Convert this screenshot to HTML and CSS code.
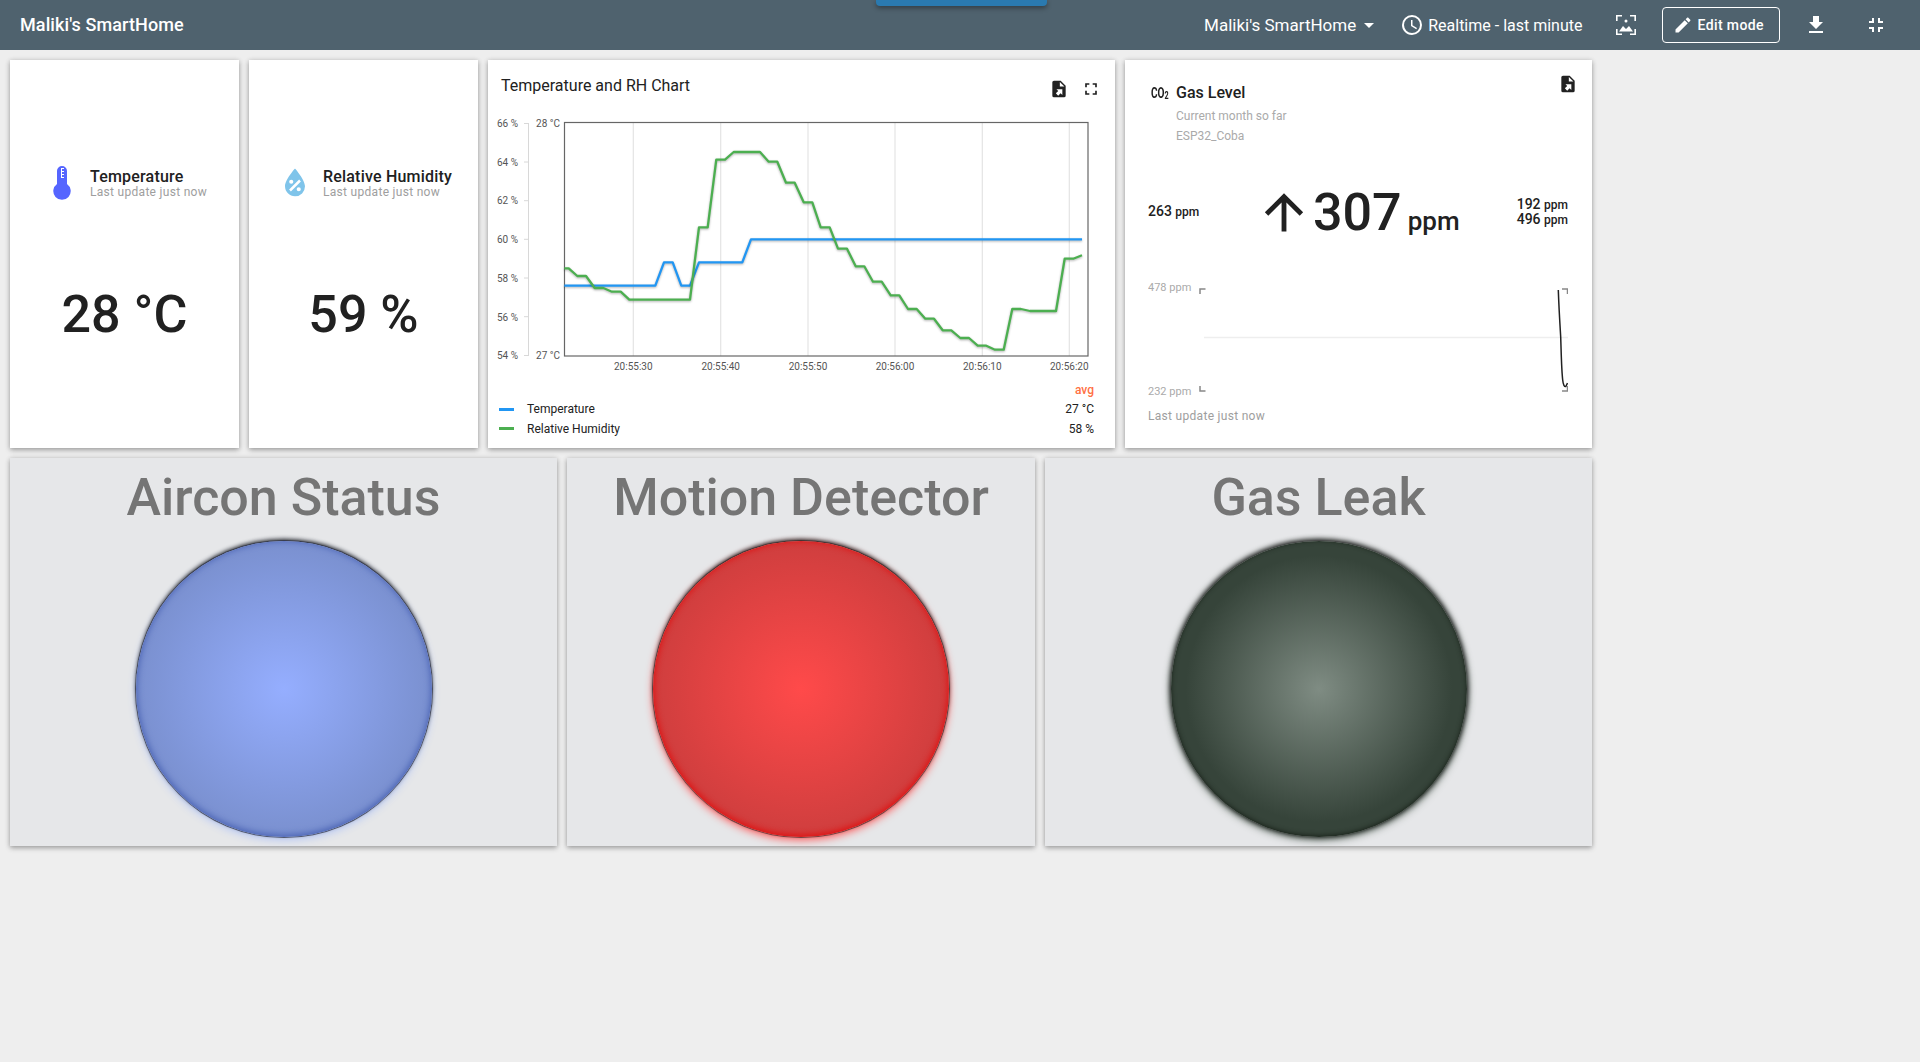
FILE: index.html
```html
<!DOCTYPE html>
<html lang="en">
<head>
	<meta charset="UTF-8">
	<meta name="viewport" content="width=device-width, initial-scale=1.0">
	<title>Maliki's SmartHome</title>
	<link rel="stylesheet" href="styles.css">
</head>
<body>
	<header class="topbar">
		<div class="brand">Maliki's SmartHome</div>
		<div class="topActions">
			<span class="navText">Maliki's SmartHome</span>
			<span class="caret"></span>
			<svg class="icon clockIcon" viewBox="0 0 24 24"><path d="M12,20A8,8 0 0,0 20,12A8,8 0 0,0 12,4A8,8 0 0,0 4,12A8,8 0 0,0 12,20M12,2A10,10 0 0,1 22,12A10,10 0 0,1 12,22C6.47,22 2,17.5 2,12A10,10 0 0,1 12,2M12.5,7V12.25L17,14.92L16.25,16.15L11,13V7H12.5Z"/></svg>
			<span class="rangeText">Realtime - last minute</span>
			<svg class="icon frameIcon" viewBox="0 0 24 24"><path d="M2,2H8V3.6H3.6V8H2ZM16,2H22V8H20.4V3.6H16ZM2,16H3.6V20.4H8V22H2ZM20.4,16H22V22H16V20.4H20.4ZM12,6.5A1.5,1.5 0 1,1 12,9.5A1.5,1.5 0 1,1 12,6.5ZM5,18.5L9,13L12,16L15,13L19,18.5Z"/></svg>
			<button class="editButton">
				<svg class="pencil" viewBox="0 0 24 24"><path d="M20.71,7.04C21.1,6.65 21.1,6 20.71,5.63L18.37,3.29C18,2.9 17.35,2.9 16.96,3.29L15.12,5.12L18.87,8.87M3,17.25V21H6.75L17.81,9.93L14.06,6.18L3,17.25Z"/></svg>
				Edit mode
			</button>
			<svg class="icon downloadIcon" viewBox="0 0 24 24"><path d="M5,20H19V18H5M19,9H15V3H9V9H5L12,16L19,9Z"/></svg>
			<svg class="icon exitIcon" viewBox="0 0 24 24"><path d="M14,14H19V16H16V19H14V14M5,14H10V19H8V16H5V14M8,5H10V10H5V8H8V5M19,8V10H14V5H16V8H19Z"/></svg>
		</div>
	</header>
	<div class="topTab"></div>

	<main class="board">
		<div class="row">
			<section class="card statCard">
				<div class="statHead">
					<svg class="statIcon" viewBox="0 0 40 40">
						<path class="thermoBody" d="M15,7A5,5 0 0,1 25,7V20A8.7,8.7 0 1,1 15,20Z"/>
						<path class="thermoTicks" d="M19,4H22V5H20V7H22V8H20V10H22V11H20V13H22V14H19Z"/>
					</svg>
					<div>
						<div class="statTitle">Temperature</div>
						<div class="statSub">Last update just now</div>
					</div>
				</div>
				<div class="statValue">28 °C</div>
			</section>
			<section class="card statCard">
				<div class="statHead">
					<svg class="statIcon dropIcon" viewBox="0 0.6 24 24"><path d="M12,3.25C12,3.25 6,10 6,14C6,17.32 8.69,20 12,20A6,6 0 0,0 18,14C18,10 12,3.25 12,3.25M14.47,9.97L15.53,11.03L9.53,17.03L8.47,15.97M9.75,10A1.25,1.25 0 0,1 11,11.25A1.25,1.25 0 0,1 9.75,12.5A1.25,1.25 0 0,1 8.5,11.25A1.25,1.25 0 0,1 9.75,10M14.25,14.5A1.25,1.25 0 0,1 15.5,15.75A1.25,1.25 0 0,1 14.25,17A1.25,1.25 0 0,1 13,15.75A1.25,1.25 0 0,1 14.25,14.5Z"/></svg>
					<div>
						<div class="statTitle">Relative Humidity</div>
						<div class="statSub">Last update just now</div>
					</div>
				</div>
				<div class="statValue">59 %</div>
			</section>
			<section class="card chartCard">
				<div class="chartHead">
					<span class="chartTitle">Temperature and RH Chart</span>
					<svg class="smallIcon" viewBox="0 0 24 24"><path d="M6,2C4.89,2 4,2.9 4,4V20A2,2 0 0,0 6,22H18A2,2 0 0,0 20,20V8L14,2M13,3.5L18.5,9H13M8.93,12.22H16V19.29L13.88,17.17L11.05,20L8.22,17.17L11.05,14.35"/></svg>
					<svg class="smallIcon" viewBox="0 0 24 24"><path d="M5,5H10V7H7V10H5V5M14,5H19V10H17V7H14V5M17,14H19V19H14V17H17V14M10,17V19H5V14H7V17H10Z"/></svg>
				</div>
				<svg class="chart" viewBox="488 110 627 270">
					<path class="axisLine" d="M528.5,123V356M524,123.5H528.5M524,162H528.5M524,200.7H528.5M524,239.3H528.5M524,278H528.5M524,316.7H528.5M524,355.5H528.5"/>
					<path class="gridLine" d="M633.3,123V356M720.7,123V356M808,123V356M895,123V356M982.3,123V356M1069.3,123V356"/>
					<rect class="plotBox" x="564.5" y="122.5" width="523.5" height="233.5"/>
					<polyline class="seriesBlue" points="564.3,285.7 655.3,285.7 664,262.3 672.7,262.3 681.3,285.7 690,285.7 699,262.3 742.3,262.3 751,239.3 1082,239.3"/>
					<polyline class="seriesGreen" points="564.3,268.3 568.7,268.3 577.3,276 586,276 594.7,288 603.3,288 612,291.7 620.7,291.7 629.3,299.7 690,299.7 699,227.3 707.7,227.3 716.3,159.7 725,159.7 733.7,152 760,152 768.7,161.7 777.3,161.7 786,182.7 794.7,182.7 803.7,202.3 812.3,202.3 820.7,227.3 829.7,227.3 838,248.7 847,248.7 855.7,266.3 864.3,266.3 873,281.7 881.7,281.7 890.7,295.3 899.3,295.3 908,309 916.7,309 925.3,318.7 934,318.7 942.7,330.3 951.3,330.3 960.3,338 969,338 977.7,345.7 986.3,345.7 995,349.7 1003.7,349.7 1012.3,309 1021,309 1030,311 1056,311 1064.7,258.7 1073.3,258.7 1082,255.3"/>
					<g class="axisText endText">
						<text x="518" y="127">66 %</text>
						<text x="518" y="165.5">64 %</text>
						<text x="518" y="204">62 %</text>
						<text x="518" y="243">60 %</text>
						<text x="518" y="281.5">58 %</text>
						<text x="518" y="320.5">56 %</text>
						<text x="518" y="359">54 %</text>
						<text x="560" y="127">28 °C</text>
						<text x="560" y="359">27 °C</text>
					</g>
					<g class="axisText midText">
						<text x="633.3" y="370">20:55:30</text>
						<text x="720.7" y="370">20:55:40</text>
						<text x="808" y="370">20:55:50</text>
						<text x="895" y="370">20:56:00</text>
						<text x="982.3" y="370">20:56:10</text>
						<text x="1069.3" y="370">20:56:20</text>
					</g>
				</svg>
				<div class="legend">
					<span></span><span></span><span class="legendAvg">avg</span>
					<span class="swatch swatchBlue"></span><span>Temperature</span><span class="legendValue">27 °C</span>
					<span class="swatch swatchGreen"></span><span>Relative Humidity</span><span class="legendValue">58 %</span>
				</div>
			</section>
			<section class="card gasCard">
				<div class="gasHead">
					<span class="co2Icon">CO<sub>2</sub></span>
					<div class="gasTitles">
						<div class="gasTitle">Gas Level</div>
						<div class="gasSub">Current month so far</div>
						<div class="gasSub">ESP32_Coba</div>
					</div>
					<svg class="smallIcon gasExport" viewBox="0 0 24 24"><path d="M6,2C4.89,2 4,2.9 4,4V20A2,2 0 0,0 6,22H18A2,2 0 0,0 20,20V8L14,2M13,3.5L18.5,9H13M8.93,12.22H16V19.29L13.88,17.17L11.05,20L8.22,17.17L11.05,14.35"/></svg>
				</div>
				<div class="gasMain">
					<div class="sideValue sideLeft">263 <small>ppm</small></div>
					<div class="bigValue">
						<svg class="arrowUp" viewBox="0 1.2 24 24"><path d="M13,20H11V8L5.5,13.5L4.08,12.08L12,4.16L19.92,12.08L18.5,13.5L13,8V20Z"/></svg>
						<span class="bigNumber">307</span>
						<span class="bigUnit">ppm</span>
					</div>
					<div class="sideStack">
						<div class="sideValue">192 <small>ppm</small></div>
						<div class="sideValue">496 <small>ppm</small></div>
					</div>
				</div>
				<svg class="spark" viewBox="1148 280 420 120">
					<text class="sparkLabel" x="1148" y="291">478 ppm</text>
					<text class="sparkLabel" x="1148" y="395">232 ppm</text>
					<path class="sparkMid" d="M1204,337.5H1568"/>
					<path class="sparkCorner" d="M1200,294V289H1205.5M1562,289H1567.5V294M1200,386V391H1205.5M1562,391H1567.5V386"/>
					<path class="sparkLine" d="M1558.3,290C1559,310 1560,325 1560.7,337C1561.3,355 1561.5,370 1562.7,380C1563.2,385 1564.5,387 1565.8,386.5L1567.5,383"/>
				</svg>
				<div class="gasFoot">Last update just now</div>
			</section>
		</div>

		<div class="row">
			<section class="card ledCard ledWide">
				<h2 class="ledTitle">Aircon Status</h2>
				<div class="led ledBlue"></div>
			</section>
			<section class="card ledCard ledNarrow">
				<h2 class="ledTitle">Motion Detector</h2>
				<div class="led ledRed"></div>
			</section>
			<section class="card ledCard ledWide">
				<h2 class="ledTitle">Gas Leak</h2>
				<div class="led ledDark"></div>
			</section>
		</div>
	</main>
</body>
</html>
```

FILE: styles.css
```css
* {
	box-sizing: border-box;
}
body {
	margin: 0;
	height: 1062px;
	overflow: hidden;
	font-family: 'Roboto', 'Liberation Sans', sans-serif;
	color: #212121;
	background-color: #eeeeee;
}
svg {
	display: block;
	flex: none;
}

/* top bar */
.topbar {
	display: flex;
	align-items: center;
	height: 50px;
	padding: 0 32px 0 20px;
	background-color: #4f626e;
	color: #fff;
}
.brand {
	margin-top: -2px;
	font-size: 18px;
	font-weight: 500;
	letter-spacing: 0.1px;
}
.topActions {
	display: flex;
	align-items: center;
	margin-left: auto;
}
.navText {
	font-size: 17px;
}
.rangeText {
	margin-left: 4px;
	font-size: 16px;
}
.caret {
	margin-left: 8px;
	border-top: 5px solid #fff;
	border-left: 5px solid transparent;
	border-right: 5px solid transparent;
}
.icon {
	width: 24px;
	height: 24px;
	fill: #fff;
}
.clockIcon {
	margin-left: 26px;
}
.frameIcon {
	margin-left: 32px;
}
.editButton {
	display: flex;
	align-items: center;
	gap: 4px;
	height: 36px;
	margin-left: 24px;
	padding: 0 15px 0 10px;
	border: 1px solid #fff;
	border-radius: 4px;
	background: none;
	color: #fff;
	font-family: inherit;
	font-size: 14px;
	font-weight: 500;
	letter-spacing: 0.4px;
}
.pencil {
	width: 20px;
	height: 20px;
	fill: #fff;
}
.downloadIcon {
	margin-left: 24px;
}
.exitIcon {
	margin-left: 36px;
}
.topTab {
	position: absolute;
	top: 0;
	left: 876px;
	width: 171px;
	height: 6px;
	border-radius: 0 0 4px 4px;
	background-color: #2a7ab0;
	box-shadow: 0 2px 5px rgba(0, 0, 0, 0.4);
}

/* board */
.board {
	display: flex;
	flex-direction: column;
	gap: 10px;
	padding: 10px;
}
.row {
	display: flex;
	gap: 10px;
}
.card {
	height: 388px;
	background-color: #fff;
	box-shadow: 0 2px 5px rgba(0, 0, 0, 0.3), 0 0 5px rgba(0, 0, 0, 0.1);
}

/* temperature and humidity */
.statCard {
	width: 229px;
	padding-top: 104px;
}
.statHead {
	display: flex;
	justify-content: center;
	align-items: center;
	gap: 8px;
}
.statIcon {
	width: 40px;
	height: 40px;
}
.thermoBody {
	fill: #5565ff;
}
.thermoTicks {
	fill: #fff;
}
.dropIcon {
	fill: #7fc4ea;
}
.statTitle {
	font-size: 16px;
	font-weight: 500;
	line-height: 17px;
	letter-spacing: 0.2px;
}
.statSub {
	font-size: 12px;
	line-height: 15px;
	letter-spacing: 0.3px;
	color: #9e9e9e;
}
.statValue {
	margin-top: 81px;
	font-size: 52px;
	font-weight: 500;
	line-height: 60px;
	text-align: center;
}

/* chart */
.chartCard {
	width: 627px;
}
.chartHead {
	display: flex;
	align-items: center;
	gap: 12px;
	height: 50px;
	padding: 8px 14px 0 13px;
}
.chartTitle {
	margin-right: auto;
	margin-top: -8px;
	font-size: 16px;
}
.smallIcon {
	width: 20px;
	height: 20px;
	fill: #212121;
}
.chart {
	width: 627px;
	height: 270px;
}
.axisLine {
	fill: none;
	stroke: #d8d8d8;
	stroke-width: 1;
}
.gridLine {
	fill: none;
	stroke: #e4e4e4;
	stroke-width: 1.2;
}
.plotBox {
	fill: none;
	stroke: #666;
	stroke-width: 1.2;
}
.seriesBlue,
.seriesGreen {
	fill: none;
	stroke-width: 2.3;
	stroke-linejoin: round;
	filter: drop-shadow(0 1px 1px rgba(0, 0, 0, 0.3));
}
.seriesBlue {
	stroke: #2196f3;
}
.seriesGreen {
	stroke: #4caf50;
}
.axisText {
	font-size: 10px;
	fill: #555;
}
.endText {
	text-anchor: end;
}
.midText {
	text-anchor: middle;
}
.legend {
	display: grid;
	grid-template-columns: 15px 1fr auto;
	grid-auto-rows: 19.5px;
	align-items: center;
	column-gap: 13px;
	padding: 0 21px 0 11px;
	font-size: 12px;
}
.legendAvg {
	font-weight: 500;
	text-align: right;
	color: #ff7043;
}
.legendValue {
	text-align: right;
}
.swatch {
	height: 3px;
}
.swatchBlue {
	background-color: #2196f3;
}
.swatchGreen {
	background-color: #4caf50;
}

/* gas level */
.gasCard {
	width: 467px;
	padding: 14px 24px 0 23px;
}
.gasHead {
	display: flex;
	height: 112px;
}
.co2Icon {
	flex: none;
	width: 20px;
	height: 14px;
	margin: 12px 0 0 3px;
	font-size: 14px;
	font-weight: 700;
	line-height: 14px;
	white-space: nowrap;
	transform: scaleX(0.72);
	transform-origin: left;
}
.co2Icon sub {
	font-size: 10px;
	line-height: 0;
	vertical-align: -1px;
}
.gasTitles {
	margin: 9px 0 0 5px;
}
.gasTitle {
	margin-bottom: 3px;
	font-size: 16px;
	font-weight: 500;
	line-height: 20px;
}
.gasSub {
	font-size: 12px;
	line-height: 20px;
	color: #aaa;
}
.gasExport {
	margin: 0 -10px 0 auto;
}
.gasMain {
	display: grid;
	grid-template-columns: 107px 1fr auto;
	align-items: center;
	height: 54px;
}
.sideValue {
	font-size: 14px;
	font-weight: 500;
	line-height: 14px;
}
.sideValue small {
	font-size: 12px;
}
.sideLeft {
	padding-bottom: 7px;
}
.sideStack {
	padding-bottom: 7px;
}
.bigValue {
	display: flex;
	align-items: baseline;
}
.arrowUp {
	width: 58px;
	height: 58px;
	align-self: center;
	fill: #212121;
}
.bigNumber {
	font-size: 52px;
	font-weight: 500;
	line-height: 54px;
}
.bigUnit {
	margin-left: 6px;
	font-size: 26px;
	font-weight: 500;
}
.spark {
	width: 420px;
	height: 120px;
	margin-top: 40px;
}
.sparkLabel {
	font-size: 11px;
	fill: #aaa;
}
.sparkMid {
	fill: none;
	stroke: #eee;
	stroke-width: 1.5;
}
.sparkCorner {
	fill: none;
	stroke: #888;
	stroke-width: 1.5;
}
.sparkLine {
	fill: none;
	stroke: #212121;
	stroke-width: 1.5;
}
.gasFoot {
	margin-top: 6px;
	font-size: 12px;
	line-height: 20px;
	letter-spacing: 0.3px;
	color: #9e9e9e;
}

/* status lights */
.ledCard {
	display: flex;
	flex-direction: column;
	align-items: center;
	padding-top: 10px;
	background-color: #e6e7e9;
}
.ledWide {
	width: 547px;
}
.ledNarrow {
	width: 468px;
}
.ledTitle {
	margin: 0;
	font-size: 52px;
	font-weight: 500;
	line-height: 60px;
	color: #757575;
}
.led {
	width: 296px;
	height: 296px;
	margin-top: 13px;
	border-radius: 50%;
}
.ledBlue {
	background: radial-gradient(circle closest-side, #95aeff, #7a90cf);
	box-shadow: 0 0 0 1px rgba(50, 55, 75, 0.75), rgba(0, 0, 0, 0.85) 0 -2px 4px 0, inset #4a63b5 0 -1px 6px 1px, #b4c6f5 0 3px 8px;
}
.ledRed {
	background: radial-gradient(circle closest-side, #ff4a4a, #cf3e3e);
	box-shadow: 0 0 0 1px rgba(60, 40, 40, 0.65), rgba(0, 0, 0, 0.85) 0 -2px 4px 0, inset #e01010 0 -1px 6px 1px, #ff5a5a 0 3px 8px;
}
.ledDark {
	background: radial-gradient(circle closest-side, #7f8c83, #36443a 90%);
	box-shadow: rgba(0, 0, 0, 0.85) 0 -1px 5px 1px, inset #182018 0 -1px 5px, #3a4a3e 0 2px 8px;
}
```
